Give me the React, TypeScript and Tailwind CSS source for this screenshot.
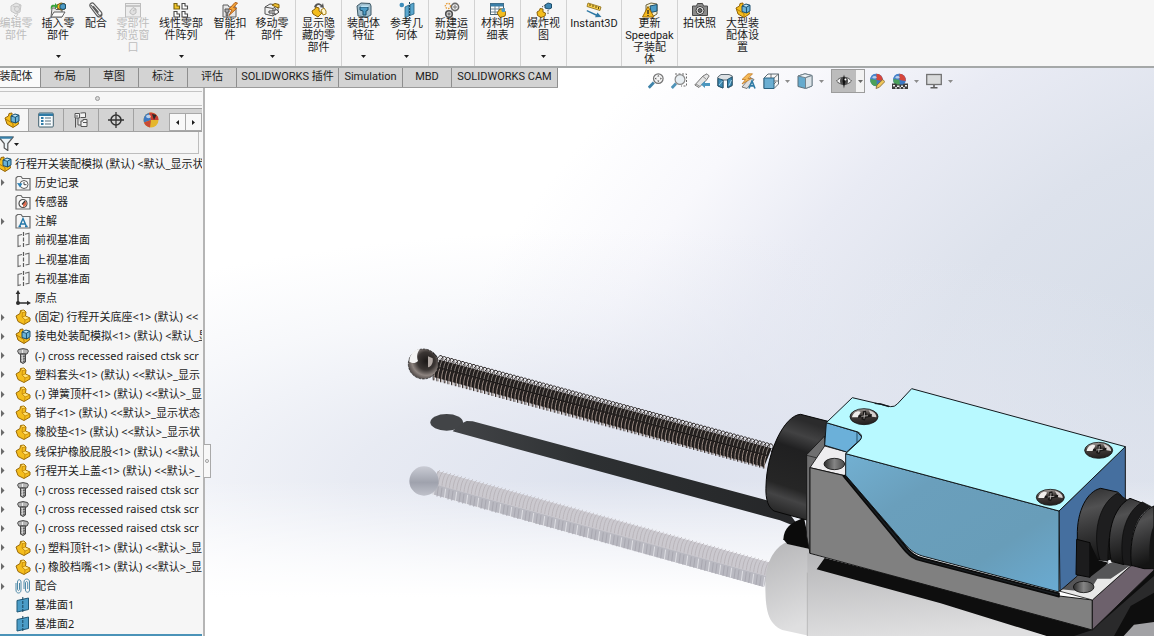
import React from "react";

type IconName =
  | "editPart" | "insert" | "clip" | "preview" | "pattern" | "fastener" | "move" | "showHide"
  | "features" | "refGeo" | "motion" | "bom" | "explode" | "instant" | "speedpak" | "camera" | "largeAsm"
  | "asm" | "part" | "screw" | "plane" | "origin" | "history" | "sensor" | "note" | "mates" | "planeBlue"
  | "props" | "config" | "target" | "ball" | "filter"
  | "zoomFit" | "zoomArea" | "prevView" | "section" | "annot" | "orient" | "display" | "eye" | "appearance" | "scene" | "monitor";

const partPath = (
  <g strokeLinejoin="round">
    <path d="M1 7 L5 4.5 L5.5 1.5 L9 1 L11 3 L10.5 7 L15 9 L15 12 L9 15.5 L3 12.5 Z" fill="#f4bd1d" stroke="#9a6a06" />
    <path d="M5.5 1.5 L7.5 3.5 L11 3 M7.5 3.5 L7 8 L10.5 7 M7 8 L10 11 L15 9 M10 11 L9.5 15" fill="none" stroke="#c48a10" strokeWidth="0.8" />
    <path d="M6 2 L9 1.5 L10 2.6 L7.7 3 Z M8 8.2 L10.5 7.5 L13.7 9 L10.2 10.3 Z" fill="#ffe27a" />
  </g>
);

const asmPath = (
  <g strokeLinejoin="round">
    <path d="M1 6 L4.5 4 L5 1.5 L8 1 L8 8 L14 9.5 L14.5 12 L9 15.5 L3 12 Z" fill="#f4bd1d" stroke="#946407" />
    <path d="M1.5 7 L9 11.5 L9 15" fill="none" stroke="#b37d0a" />
    <path d="M7 4 L11 2 L15 3.2 L15 9 L11.5 11 L7 9.5 Z" fill="#6bb3d8" stroke="#1c4f6e" />
    <path d="M7 4 L11.4 5.2 L15 3.2 M11.4 5.2 L11.5 11" fill="none" stroke="#1c4f6e" />
    <path d="M8.4 4 L11 2.7 L13.4 3.4 L11.3 4.6 Z" fill="#c4e7f6" />
  </g>
);

const folder = <path d="M1 15 L1 3 L2.5 1.5 L6 1.5 L7.5 3.5 L15 3.5 L15 15 Z" fill="#f5f5f5" stroke="#6b6b6b" strokeWidth="1.2" />;

const smallBall = (
  <>
    <circle cx="7.5" cy="7" r="6.3" fill="#3b78c5" />
    <path d="M7.5 7 L1.3 6 A6.3 6.3 0 0 1 7.5 0.7 Z" fill="#4a86cc" />
    <path d="M7.5 7 L7.5 0.7 A6.3 6.3 0 0 1 13.8 8 Z" fill="#d6463b" />
    <path d="M7.5 7 L1.3 6 A6.3 6.3 0 0 0 8 13.3 Z" fill="#4ba05a" />
    <ellipse cx="5.5" cy="4.2" rx="2" ry="1.3" fill="#ffffff" opacity="0.6" />
  </>
);

const icons: Record<IconName, React.ReactNode> = {
  editPart: (
    <g stroke="#c4c4c4" fill="#e2e2e2">
      <path d="M3 4 L8 1 L13 3 L12 10 L8 12 L3 9 Z" />
      <path d="M5 4 L10 6 L12 3 M10 6 L9 11 M6 13 L8 15 L10 12" fill="none" />
      <circle cx="9" cy="7" r="2.5" />
    </g>
  ),
  insert: (
    <>
      <path d="M1 15 L2 6 L5 6 L6 7.5 L12 7.5 L12 15 Z" fill="#e8e8e8" stroke="#606060" />
      <path d="M1 15 L4 10 L15 10 L12 15 Z" fill="#fafafa" stroke="#606060" />
      <path d="M7 3 L11 1 L15 2 L15 7 L11 8 L7 6 Z" fill="#f4bd1d" stroke="#6e5009" />
      <path d="M10 3 L13 1.5 L15.5 2.5 L15.5 6.5 L13 7.5 L10 6.5 Z" fill="#4d9bc5" stroke="#1d4e6b" />
      <path d="M1 8 C0 3 2 2 5 3 L5 1 L8 4 L5 7 L5 5 C3 4 2 5 1 8" fill="#38a33c" />
    </>
  ),
  clip: <path d="M3 3 L10.5 12.5 C12 14.5 15 12.5 13.3 10 L6 1.8 C4 -0.2 0.6 2 2.4 5 L9.3 14 C11 16 14.5 14.5 13.8 12 M10.5 10.5 L5.2 4.2" fill="none" stroke="#5b5b5b" strokeWidth="1.2" />,
  preview: (
    <g stroke="#bdbdbd" fill="#ededed">
      <rect x="0.5" y="1.5" width="15" height="13.5" />
      <path d="M1 4 L15 4" strokeWidth="1.6" />
      <path d="M5 9 L8 5.5 L11 7 L11 11 L8 13 L5 11 Z M8 9 L11 7" fill="#e0e0e0" />
    </g>
  ),
  pattern: (
    <g strokeWidth="1.1">
      <path d="M1 1.5 L4 1.5 L4 4 L6.5 4 L6.5 7 L1 7 Z" fill="#f2c62b" stroke="#77620e" />
      <path d="M9 1.5 L12 1.5 L12 4 L14.5 4 L14.5 7 L9 7 Z M1 9.5 L4 9.5 L4 12 L6.5 12 L6.5 15 L1 15 Z M9 9.5 L12 9.5 L12 12 L14.5 12 L14.5 15 L9 15 Z" fill="#ffffff" stroke="#4a4a4a" />
    </g>
  ),
  fastener: (
    <>
      <path d="M1 15 L1 3 L6 3 L7 5 L14 5 L14 15 Z" fill="#e7e7e7" stroke="#5c5c5c" />
      <path d="M3 7 L7 7 L7 10 L5.8 10 L5.8 14 L4.2 14 L4.2 10 L3 10 Z" fill="#a9a9a9" stroke="#555555" />
      <path d="M13 0.5 L7 7 L10 8 L7 13.5 L14.5 6.5 L11.5 5.5 L15.5 1 Z" fill="#f3a63a" stroke="#b4601a" />
    </>
  ),
  move: (
    <>
      <path d="M1 5 L6 2 L14 3 L14 10 L9 14 L1 12 Z" fill="#f0f0f0" stroke="#555555" />
      <path d="M1 5 L9 6.5 L14 3 M9 6.5 L9 14" fill="none" stroke="#555555" />
      <path d="M8 3 L11 1.5 L15 2.5 L15 6 L12 5 Z" fill="#f2c233" stroke="#80600d" />
      <path d="M5 9 L11 9 L11 6.5 L15 10 L11 13 L11 11 L5 11 Z" fill="#ffffff" stroke="#3c3c3c" />
    </>
  ),
  showHide: (
    <>
      <path d="M3 5 C4 1 8 0 11 3 L12 1 L13 6 L8.5 5 L10 4 C7 2 6 3 5 6 Z" fill="#555555" />
      <path d="M1 9 L4 7 L5 5 L8 6 L8 9 L11 11 L7 15 L2 12 Z" fill="#f4bd1d" stroke="#8a620b" />
      <path d="M10 8 L13 6 L15 9 L15 12 L12 13 Z" fill="#fff6d0" stroke="#a8821c" />
    </>
  ),
  features: (
    <>
      <path d="M1 4 L5 1 L14 1.5 L15 4 L15 13 L11 15 L2 14 Z" fill="#9dbccc" stroke="#3f5966" />
      <path d="M4 5 L12 5 L12 8 L10 9 L10 13 L7 13 L7 9 L4 8 Z" fill="#4d9bc5" stroke="#1d4e6b" />
      <path d="M4 5 L6 3.5 L13 3.5 L12 5 Z" fill="#bfe3f3" />
    </>
  ),
  refGeo: (
    <>
      <circle cx="2.8" cy="3" r="2.3" fill="#3d8cba" />
      <path d="M6 5 L10 3 L10 14 L6 15.5 Z M11 2.5 L15 1 L15 12 L11 13.5 Z" fill="#5aa6cd" stroke="#24607f" strokeWidth="0.8" />
      <path d="M10.5 0 L10.5 16" stroke="#1b4964" strokeDasharray="2 1" />
    </>
  ),
  motion: (
    <>
      <circle cx="4" cy="4" r="2.6" fill="none" stroke="#e69e3c" strokeWidth="1.4" strokeDasharray="1.5 1" />
      <circle cx="11" cy="5" r="3.6" fill="#f2f2f2" stroke="#6c6c6c" strokeWidth="1.6" />
      <circle cx="11" cy="5" r="1.2" fill="none" stroke="#6c6c6c" />
      <circle cx="5" cy="12" r="3.3" fill="#d6d6d6" stroke="#4f4f4f" strokeWidth="1.6" />
      <circle cx="5" cy="12" r="1" fill="#ffffff" stroke="#4f4f4f" />
    </>
  ),
  bom: (
    <>
      <rect x="0.5" y="1.5" width="13" height="11" fill="#ffffff" stroke="#476272" />
      <path d="M0.5 1.5 H13.5 V4.5 H0.5 Z" fill="#3b7fa8" />
      <path d="M1 7 H13 M1 10 H13 M5 4 V12 M9 4 V12" stroke="#6d8391" />
      <path d="M7 11 L10 7 L13 7 L13 9 L16 10 L15 14 L10 15.5 Z" fill="#f2bd20" stroke="#8a620b" />
      <path d="M11 7 L15 6 L15 10 L12 10 Z" fill="#4d9bc5" />
    </>
  ),
  explode: (
    <>
      <path d="M1 10 L3.5 8.5 L4 6.5 L7 7 L7 10 L9.5 11 L9 14 L5 15.5 L1.5 13.5 Z" fill="#f4bd1d" stroke="#8a620b" />
      <path d="M9 3 L12 1 L15.5 2 L15.5 6 L13 7 L9 6 Z" fill="#3f87b3" stroke="#1d4e6b" />
      <path d="M6 5 L9 3 M12 8 L12 12" stroke="#555555" strokeDasharray="1.5 1" />
    </>
  ),
  instant: (
    <>
      <path d="M2 1 L15 5 L14 8.5 L1 4.5 Z" fill="#f7d04c" stroke="#8a6a14" strokeWidth="0.8" />
      <path d="M4 2 V4 M7 3 V5 M10 4 V6 M12.5 5 V7" stroke="#5f490b" />
      <path d="M1 8 L10.5 12.2 L11.5 10.5 L15.5 15 L9 15.2 L9.8 13.8 L0.6 9.2 Z" fill="#2f79a5" />
    </>
  ),
  speedpak: (
    <>
      <path d="M4 3 L9 1 L15 2 L15 12 L10 15 L4 12 Z" fill="#f7f1d2" stroke="#6d6544" />
      <path d="M8 4 L15 2.5 L15 9 L9 10.5 Z" fill="#4d9bc5" stroke="#1d4e6b" />
      <path d="M6 4.5 L12 15 L0.5 15 Z" fill="#f5b91e" stroke="#9b6c06" />
      <path d="M6 8 V12 M6 13 V14" stroke="#222222" strokeWidth="1.3" />
    </>
  ),
  camera: (
    <>
      <path d="M0.5 4 H4.5 L5.5 1.5 H10.5 L11.5 4 H15.5 V13.5 H0.5 Z" fill="#8b8b8b" stroke="#484848" />
      <circle cx="8" cy="8.5" r="4" fill="#f0f0f0" stroke="#3a3a3a" />
      <circle cx="8" cy="8.5" r="2" fill="#6a6a6a" stroke="#333333" />
    </>
  ),
  largeAsm: asmPath,
  asm: asmPath,
  part: partPath,
  screw: (
    <>
      <path d="M3.5 1.5 L8 0.6 L12.5 1.5 L13.4 3.2 L12 6 L4 6 L2.6 3.2 Z" fill="#b5b5b5" stroke="#474747" />
      <path d="M5.5 6 H10.5 V14 L8 15.5 L5.5 14 Z" fill="#a2a2a2" stroke="#474747" />
      <path d="M5 9 L11 8 M5 11.5 L11 10.5 M5 14 L11 13" stroke="#4a4a4a" strokeWidth="0.8" />
      <path d="M7.5 2 V5 M7.2 7 V14" stroke="#eeeeee" />
    </>
  ),
  plane: (
    <>
      <path d="M7 2.5 L3 3.5 V14.5 L6 13.8 M10 2.2 L14 1.2 V12.2 L10.5 13" fill="none" stroke="#6a6a6a" strokeWidth="1.1" />
      <path d="M8.5 0 V16" stroke="#5a5a5a" strokeWidth="1.2" strokeDasharray="4 1.5" />
    </>
  ),
  origin: (
    <>
      <path d="M3 2 V13 H14" fill="none" stroke="#2e2e2e" strokeWidth="1.5" />
      <path d="M3 0 L5.3 4 H0.7 Z M16 13 L12 10.8 V15.2 Z" fill="#2e2e2e" />
      <circle cx="3" cy="13" r="2" fill="#2e2e2e" />
    </>
  ),
  history: (
    <>
      {folder}
      <circle cx="9" cy="9.5" r="4" fill="#ffffff" stroke="#5d5d5d" />
      <path d="M9 7 V9.7 H11.5" fill="none" stroke="#444444" />
      <path d="M2 8 L5 12.5 L7.5 8.5 Z" fill="#2f83b7" />
    </>
  ),
  sensor: (
    <>
      {folder}
      <circle cx="8" cy="9.5" r="4" fill="#ffffff" stroke="#4c4c4c" strokeWidth="1.2" />
      <path d="M8 9.5 L10.5 7 A3.5 3.5 0 0 1 8 13 Z" fill="#df6b4e" />
      <path d="M7 10.5 L10 7" stroke="#333333" strokeWidth="1.2" />
    </>
  ),
  note: (
    <>
      {folder}
      <path d="M4.5 13.5 L8 5.5 L11.5 13.5 M5.8 11 H10.2 M3.5 13.5 H6 M10 13.5 H12.7" fill="none" stroke="#2477a8" strokeWidth="1.4" />
    </>
  ),
  mates: (
    <g fill="none" stroke="#4f8aa8" strokeWidth="1">
      <path d="M1 5 V12 C1 16 6 16 6 12 V4 C6 1 2.5 1 2.5 4 V11 C2.5 13 4.5 13 4.5 11 V5" />
      <path d="M9 11 V4 C9 0 14.5 0 14.5 4 V12 C14.5 15 10.5 15 10.5 12 V5 C10.5 3 12.7 3 12.7 5 V11" />
    </g>
  ),
  planeBlue: (
    <>
      <path d="M2 3.5 L13.5 1 V12.5 L2 15 Z" fill="#4a9cc7" stroke="#1e5877" />
      <path d="M7.8 0 V16" stroke="#174660" strokeDasharray="3 1" />
    </>
  ),
  props: (
    <>
      <rect x="0.7" y="1" width="14.6" height="14" rx="1" fill="#f7fbfd" stroke="#41606f" />
      <path d="M1 1.5 H15 V4 H1 Z" fill="#2f7ba6" />
      <path d="M3 6 H5.5 M3 9 H5.5 M3 12 H5.5" stroke="#2f7ba6" strokeWidth="2" />
      <path d="M7 6 H13 M7 9 H13 M7 12 H13" stroke="#56707e" strokeWidth="1.2" />
    </>
  ),
  config: (
    <g fill="#f2f2f2" stroke="#555555">
      <path d="M2 1.5 H6.5 V6 H2 Z M2.5 6 V15.5 M2.5 4 H5 M5 6 V13 H8" />
      <path d="M7.5 1 H9.5 V0.8 H12.5 V5.5 H7.5 M8 9 H10 V7.5 H14 V14.5 H8 Z M10 10.5 H14" />
    </g>
  ),
  target: (
    <>
      <circle cx="8" cy="8" r="5" fill="none" stroke="#333333" strokeWidth="1.5" />
      <path d="M8 0 V16 M0 8 H16" stroke="#333333" strokeWidth="1.3" />
    </>
  ),
  ball: (
    <>
      <circle cx="8" cy="8" r="7.5" fill="#e4b62c" />
      <path d="M8 8 L1 10.5 A7.5 7.5 0 0 1 6 0.8 Z" fill="#3d79c2" />
      <path d="M8 8 L6 0.8 A7.5 7.5 0 0 1 15.5 8 Z" fill="#c93d32" />
      <path d="M8 8 L1 10.5 A7.5 7.5 0 0 0 7 15.4 Z" fill="#c94a35" />
      <path d="M9 2 L13.5 3 L11 8 Z" fill="#2b2b2b" />
      <ellipse cx="5.5" cy="4.5" rx="2.4" ry="1.8" fill="#ffffff" opacity="0.65" />
    </>
  ),
  filter: (
    <>
      <path d="M0.7 2 H15.3 L9.8 8.5 V15.5 L6.2 13 V8.5 Z" fill="#eef4f7" stroke="#555555" strokeWidth="1.2" />
      <path d="M1 1.5 H15 L13.6 3.8 H2.4 Z" fill="#377fa8" />
    </>
  ),
  zoomFit: (
    <>
      <path d="M0.8 14.8 L5.8 9.5" stroke="#3f83a9" strokeWidth="2.8" />
      <circle cx="10.3" cy="5.6" r="4.8" fill="#f4f4f4" stroke="#747474" strokeWidth="1.2" />
      <path d="M10.3 2 L11.4 3.6 H9.2 Z M10.3 9.2 L11.4 7.6 H9.2 Z M6.7 5.6 L8.3 4.5 V6.7 Z M13.9 5.6 L12.3 4.5 V6.7 Z" fill="#555555" />
    </>
  ),
  zoomArea: (
    <>
      <path d="M4 1 H15.5 V13 H10" fill="none" stroke="#6b6b6b" strokeDasharray="2 1.5" />
      <path d="M0.8 15 L5 10.5" stroke="#4f93b8" strokeWidth="2.8" />
      <circle cx="9" cy="6.5" r="4.9" fill="#e8eef2" stroke="#8a8a8a" strokeWidth="1.2" />
    </>
  ),
  prevView: (
    <>
      <path d="M0.8 12 L9 3 L13 0.8 L15.2 3 L12.5 7 L5 14.5 Z" fill="#e4e4e4" stroke="#777777" />
      <path d="M2 11 L6 13.5 M9 3.5 L12.5 6.5" stroke="#8e8e8e" />
      <path d="M7 11.5 L11 8 V10 H16 V13 H11 V15 Z" fill="#4c97bf" />
    </>
  ),
  section: (
    <>
      <path d="M0.8 4 L4 1.5 H12 L15.3 3 V12.5 L11 15 V7 L6 7 V15 L0.8 13 Z" fill="#dde1e4" stroke="#5f6d76" />
      <path d="M1 5.5 L6 7 V15 L1 13 Z M10.5 6.5 L15 4 V12.5 L10.5 14.5 Z" fill="#3f8cb6" stroke="#24546e" />
      <path d="M2 12 L5.5 8 M12 12.5 L14.5 7" stroke="#a4d1e6" />
    </>
  ),
  annot: (
    <>
      <path d="M2 14 L10 4.5 L14 6.5 L7 15.5 Z" fill="#dedede" stroke="#777777" />
      <path d="M8 0.8 L2 6.5 H5.5 L2 11 L11.5 5.5 H8 L12.5 0.8 Z" fill="#f5b957" stroke="#c07a24" strokeWidth="0.8" />
      <path d="M9 15.5 L12 8 L15 15.5 M10.3 12.9 H13.7" fill="none" stroke="#2f7ba6" strokeWidth="1.6" />
    </>
  ),
  orient: (
    <>
      <path d="M1 5 L5 1 H15.5 V11 L11 15.5 H1 Z" fill="#f7f7f7" stroke="#5f6d76" />
      <path d="M1 5 H11 V15.5 H1 Z" fill="#6baed2" stroke="#2c6382" />
      <path d="M11 5 L15.5 1 M8 1 V5 M11 8 H15 M11 11 L13 9" fill="none" stroke="#555555" strokeWidth="0.8" />
    </>
  ),
  display: (
    <>
      <path d="M1 3 L8 0.8 L15 2.5 V13 L8.5 15.5 L1 13.5 Z" fill="#65aacd" stroke="#5d6f7a" />
      <path d="M1 3 L8.5 4.7 L15 2.5 L8 0.8 Z" fill="#eef3f6" stroke="#72828c" />
      <path d="M8.5 4.7 L15 2.5 V13 L8.5 15.5 Z" fill="#dbe3e8" stroke="#72828c" />
    </>
  ),
  eye: (
    <>
      <path d="M0.5 8 C4 3 12 3 15.5 8 C12 12.5 4 12.5 0.5 8 Z" fill="#eeeeee" stroke="#555555" />
      <circle cx="8" cy="8" r="4" fill="#4b4b4b" />
      <path d="M8 1.5 L9.4 8 L8 15.5 L6.6 8 Z" fill="#111111" />
      <circle cx="9.4" cy="6.5" r="1" fill="#ffffff" />
    </>
  ),
  appearance: (
    <>
      {smallBall}
      <path d="M7 15.5 L8 12 L13.8 6.5 L15.8 8.7 L10.3 14.3 Z" fill="#f1c75b" stroke="#7d6330" strokeWidth="0.8" />
    </>
  ),
  scene: (
    <>
      {smallBall}
      <path d="M0 10.5 H4 L5 11.5 H11 L12 10.5 H16 V16 H0 Z" fill="#3c3c3c" />
      <path d="M1 12 H3 V13.5 H1 Z M5 12.5 H7.5 V14 H5 Z M9 12.5 H11 V14 H9 Z M13 12 H15 V13.5 H13 Z M3 14.3 H5 V15.5 H3 Z M7.5 14.3 H9 V15.5 H7.5 Z M11 14.3 H13 V15.5 H11 Z" fill="#eeeeee" />
    </>
  ),
  monitor: (
    <>
      <rect x="0.7" y="1.5" width="14.6" height="10" fill="#d9dadb" stroke="#737373" strokeWidth="1.3" />
      <path d="M8 12 V14.5 M4.5 14.7 H11.5" stroke="#5d5d5d" strokeWidth="1.6" />
    </>
  ),
};

function Icon({ name }: { name: IconName }) {
  return (
    <svg viewBox="0 0 16 16" className="block size-4 shrink-0" aria-hidden="true">
      {icons[name]}
    </svg>
  );
}

function Caret({ className = "" }: { className?: string }) {
  return (
    <svg viewBox="0 0 5 3" width="5" height="3" className={"block shrink-0 " + className} aria-hidden="true">
      <path d="M0 0 H5 L2.5 3 Z" fill="currentColor" />
    </svg>
  );
}

type Tool = { icon: IconName; lines: string[]; width: string; caret?: boolean; disabled?: boolean };

const ribbon: Tool[][] = [
  [
    { icon: "editPart", lines: ["编辑零", "部件"], width: "w-8", disabled: true },
    { icon: "insert", lines: ["插入零", "部件"], width: "w-[52px]", caret: true },
    { icon: "clip", lines: ["配合"], width: "w-6" },
    { icon: "preview", lines: ["零部件", "预览窗", "口"], width: "w-[50px]", disabled: true },
    { icon: "pattern", lines: ["线性零部", "件阵列"], width: "w-[46px]", caret: true },
    { icon: "fastener", lines: ["智能扣", "件"], width: "w-[52px]" },
    { icon: "move", lines: ["移动零", "部件"], width: "w-8 mr-[7px]", caret: true },
  ],
  [{ icon: "showHide", lines: ["显示隐", "藏的零", "部件"], width: "w-[45px]" }],
  [
    { icon: "features", lines: ["装配体", "特征"], width: "w-[43px]", caret: true },
    { icon: "refGeo", lines: ["参考几", "何体"], width: "w-[43px]", caret: true },
  ],
  [{ icon: "motion", lines: ["新建运", "动算例"], width: "w-[45px]" }],
  [{ icon: "bom", lines: ["材料明", "细表"], width: "w-[45px]" }],
  [{ icon: "explode", lines: ["爆炸视", "图"], width: "w-[45px]", caret: true }],
  [{ icon: "instant", lines: ["Instant3D"], width: "w-[54px]" }],
  [{ icon: "speedpak", lines: ["更新", "Speedpak", "子装配", "体"], width: "w-[55px]" }],
  [
    { icon: "camera", lines: ["拍快照"], width: "w-[43px]" },
    { icon: "largeAsm", lines: ["大型装", "配体设", "置"], width: "w-[43px]" },
  ],
];

const tabs = [
  { label: "装配体", width: "w-[41px]" },
  { label: "布局", width: "w-[49px]" },
  { label: "草图", width: "w-[49px]" },
  { label: "标注", width: "w-[49px]" },
  { label: "评估", width: "w-[49px]" },
  { label: "SOLIDWORKS 插件", width: "w-[102px]" },
  { label: "Simulation", width: "w-16" },
  { label: "MBD", width: "w-[49px]" },
  { label: "SOLIDWORKS CAM", width: "w-[106px]" },
];

const tree: { icon: IconName; label: string; open?: boolean }[] = [
  { icon: "history", label: "历史记录", open: true },
  { icon: "sensor", label: "传感器" },
  { icon: "note", label: "注解", open: true },
  { icon: "plane", label: "前视基准面" },
  { icon: "plane", label: "上视基准面" },
  { icon: "plane", label: "右视基准面" },
  { icon: "origin", label: "原点" },
  { icon: "part", label: "(固定) 行程开关底座<1> (默认) <<", open: true },
  { icon: "asm", label: "接电处装配模拟<1> (默认) <默认_显", open: true },
  { icon: "screw", label: "(-) cross recessed raised ctsk scr", open: true },
  { icon: "part", label: "塑料套头<1> (默认) <<默认>_显示", open: true },
  { icon: "part", label: "(-) 弹簧顶杆<1> (默认) <<默认>_显", open: true },
  { icon: "part", label: "销子<1> (默认) <<默认>_显示状态", open: true },
  { icon: "part", label: "橡胶垫<1> (默认) <<默认>_显示状", open: true },
  { icon: "part", label: "线保护橡胶屁股<1> (默认) <<默认", open: true },
  { icon: "part", label: "行程开关上盖<1> (默认) <<默认>_", open: true },
  { icon: "screw", label: "(-) cross recessed raised ctsk scr", open: true },
  { icon: "screw", label: "(-) cross recessed raised ctsk scr", open: true },
  { icon: "screw", label: "(-) cross recessed raised ctsk scr", open: true },
  { icon: "part", label: "(-) 塑料顶针<1> (默认) <<默认>_显", open: true },
  { icon: "part", label: "(-) 橡胶档嘴<1> (默认) <<默认>_显", open: true },
  { icon: "mates", label: "配合", open: true },
  { icon: "planeBlue", label: "基准面1" },
  { icon: "planeBlue", label: "基准面2" },
];

const coils = Array.from({ length: 91 }, (_, i) => i);

function Spring() {
  return (
    <g>
      <path d="M118 74 L1115 340 L1092 396 L100 126 Z" fill="#1d1a19" />
      {coils.map((i) => {
        const x = 108 + i * 11;
        const y = 66 + i * 2.94;
        return (
          <g key={i} fill="none">
            <path d={`M${x - 8} ${y + 70} C${x - 12} ${y + 40} ${x} ${y + 2} ${x + 12} ${y - 4} C${x + 22} ${y - 6} ${x + 24} ${y + 8} ${x + 16} ${y + 20}`} stroke="#2a2423" strokeWidth="3" />
            <path d={`M${x - 4} ${y + 70} C${x - 7} ${y + 52} ${x - 3} ${y + 42} ${x} ${y + 32}`} stroke="#a8978f" strokeWidth="2.8" />
            <path d={`M${x + 1} ${y + 28} C${x + 3} ${y + 12} ${x + 9} ${y + 4} ${x + 15} ${y + 3}`} stroke="#b5aca5" strokeWidth="2.2" />
            <path d={`M${x + 14} ${y - 1} L${x + 20} ${y + 5}`} stroke="#f2efec" strokeWidth="2" />
          </g>
        );
      })}
      <circle cx="70" cy="87" r="45" fill="url(#ball)" stroke="#111111" strokeWidth="2" strokeDasharray="8 3" />
      <path d="M28 80 C30 52 46 43 60 42 C50 54 50 66 54 78 C45 86 38 86 28 80 Z" fill="#f4f4f4" />
      <path d="M84 64 L98 70 C100 85 94 95 84 97 Z" fill="#c9bfbb" opacity="0.85" />
      <path d="M98 52 L112 66" stroke="#111111" strokeWidth="3" />
    </g>
  );
}

function SpringReflection() {
  return (
    <g>
      <path d="M112 408 L1115 684 L1092 756 L98 478 Z" fill="#cbc9cf" />
      <path d="M104 448 L1100 724 L1092 756 L98 478 Z" fill="#b9b9c1" />
      {coils.map((i) => {
        const x = 108 + i * 11;
        const y = 406 + i * 3.04;
        return (
          <g key={i} fill="none" opacity="0.75">
            <path d={`M${x - 4} ${y + 40} C${x - 2} ${y + 20} ${x + 4} ${y + 4} ${x + 12} ${y}`} stroke="#b4afb4" strokeWidth="3" />
            <path d={`M${x - 8} ${y + 76} L${x - 4} ${y + 46}`} stroke={i % 3 === 0 ? "#ececf0" : "#a3a2ab"} strokeWidth="3" />
          </g>
        );
      })}
      <circle cx="72" cy="438" r="44" fill="url(#ballReflection)" />
    </g>
  );
}

function Screw({ x, y }: { x: number; y: number }) {
  return (
    <g transform={`translate(${x} ${y})`}>
      <ellipse rx="42" ry="24" fill="url(#screwHead)" stroke="#141414" strokeWidth="2.5" />
      <path d="M-36 2 C-34 -15 -15 -20 -10 -14 L-18 2 Z" fill="#f1eeec" />
      <path d="M14 -19 C30 -16 38 -6 37 2 L24 0 Z" fill="#d6d0ce" />
      <path d="M-16 -5 L-2 -4 L-4 -16 L6 -18 L8 -5 L24 -8 L22 0 L6 3 L2 12 L-8 8 L-6 2 L-18 3 Z" fill="#191716" />
      <path d="M-8 -1 L12 -3 M2 -13 L0 6" stroke="#e8e2df" strokeWidth="2" />
    </g>
  );
}

function Hole({ x, y }: { x: number; y: number }) {
  return <ellipse cx={x} cy={y} rx="31" ry="17" fill="url(#hole)" stroke="#111111" strokeWidth="2.5" />;
}

function Scene() {
  return (
    <svg viewBox="0 68 1154 568" preserveAspectRatio="xMaxYMax slice" className="absolute inset-0 size-full" role="img" aria-label="行程开关装配模拟">
      <defs>
        <radialGradient id="sky" gradientUnits="userSpaceOnUse" cx="0" cy="0" r="1" gradientTransform="translate(1200 330) rotate(-28) scale(860 540)">
          <stop offset="0" stopColor="#d6dde8" />
          <stop offset="0.35" stopColor="#dde2ec" />
          <stop offset="0.6" stopColor="#e9ebf4" />
          <stop offset="0.8" stopColor="#f8f8fc" />
          <stop offset="1" stopColor="#ffffff" />
        </radialGradient>
        <radialGradient id="haze" gradientUnits="userSpaceOnUse" cx="0" cy="0" r="1" gradientTransform="translate(620 480) scale(760 250)">
          <stop offset="0" stopColor="#dde2ee" />
          <stop offset="0.35" stopColor="#e0e4ef" stopOpacity="0.75" />
          <stop offset="0.7" stopColor="#e3e7f1" stopOpacity="0.3" />
          <stop offset="1" stopColor="#e6e9f2" stopOpacity="0" />
        </radialGradient>
        <linearGradient id="floor" x1="0" y1="0" x2="0" y2="1">
          <stop offset="0" stopColor="#ffffff" stopOpacity="0" />
          <stop offset="0.75" stopColor="#ffffff" />
        </linearGradient>
        <radialGradient id="ball" cx="0.6" cy="0.4" r="0.6">
          <stop offset="0" stopColor="#1b1817" />
          <stop offset="0.5" stopColor="#3b3634" />
          <stop offset="0.8" stopColor="#8d8480" />
          <stop offset="1" stopColor="#5d5654" />
        </radialGradient>
        <linearGradient id="ballReflection" x1="0" y1="0" x2="0" y2="1">
          <stop offset="0" stopColor="#c9cbd4" />
          <stop offset="0.55" stopColor="#9fa2ad" />
          <stop offset="1" stopColor="#bfc1ca" />
        </linearGradient>
        <linearGradient id="rodShadow" x1="0" y1="0" x2="1" y2="0">
          <stop offset="0" stopColor="#424447" />
          <stop offset="0.4" stopColor="#2d3032" />
          <stop offset="1" stopColor="#252628" />
        </linearGradient>
        <linearGradient id="front" x1="0" y1="0" x2="1" y2="1">
          <stop offset="0" stopColor="#72b0d2" />
          <stop offset="0.3" stopColor="#6a9fbc" />
          <stop offset="0.7" stopColor="#689db9" />
          <stop offset="1" stopColor="#6aabd2" />
        </linearGradient>
        <linearGradient id="cap" x1="0.3" y1="0" x2="0.1" y2="1">
          <stop offset="0" stopColor="#2b2b2c" />
          <stop offset="0.14" stopColor="#424243" />
          <stop offset="0.28" stopColor="#202021" />
          <stop offset="0.65" stopColor="#262626" />
          <stop offset="0.76" stopColor="#444445" />
          <stop offset="1" stopColor="#161616" />
        </linearGradient>
        <linearGradient id="mirror" x1="0" y1="0" x2="0.2" y2="1">
          <stop offset="0" stopColor="#b6b6b8" />
          <stop offset="1" stopColor="#dfdfe0" />
        </linearGradient>
        <linearGradient id="screwHead" x1="0" y1="0" x2="0.2" y2="1">
          <stop offset="0" stopColor="#c8c1bd" />
          <stop offset="0.4" stopColor="#4b4542" />
          <stop offset="1" stopColor="#252120" />
        </linearGradient>
        <linearGradient id="hole" x1="0" y1="0" x2="1" y2="0">
          <stop offset="0" stopColor="#2b2b2b" />
          <stop offset="0.5" stopColor="#858585" />
          <stop offset="1" stopColor="#4a4a4a" />
        </linearGradient>
        <linearGradient id="rubber" x1="0" y1="0" x2="0.15" y2="1">
          <stop offset="0" stopColor="#2c2c2d" />
          <stop offset="0.3" stopColor="#515152" />
          <stop offset="0.55" stopColor="#3a3a3b" />
          <stop offset="1" stopColor="#141414" />
        </linearGradient>
      </defs>

      <rect y="68" width="1154" height="568" fill="#ffffff" />
      <rect y="68" width="1154" height="568" fill="url(#sky)" />
      <rect y="68" width="1154" height="568" fill="url(#haze)" />
      <rect y="480" width="1154" height="156" fill="url(#floor)" />

      <g transform="translate(400 335) scale(0.33333)">
        <ellipse cx="140" cy="262" rx="49" ry="25" fill="#424447" />
        <path d="M158 289 L180 268 L200 258 L218 259 L1100 496 L1150 510 L1200 580 L1140 556 Z" fill="url(#rodShadow)" />
        <SpringReflection />
        <Spring />
      </g>

      <g transform="translate(754 376) scale(0.33333)" strokeLinejoin="round">
        <path d="M34 620 C35 555 65 512 95 500 L168 520 L168 780 L85 762 C40 742 34 700 34 620 Z" fill="url(#mirror)" />
        <path d="M160 530 L220 548 L900 790 L160 790 Z" fill="url(#mirror)" />
        <path d="M160 590 V780" stroke="#aaaaac" strokeWidth="2" />
        <path d="M88 490 C90 455 110 440 150 425 L170 520 L100 504 Z" fill="#0b0b0b" />
        <path d="M212 546 L1015 752 L1200 560 L1200 790 L910 790 L560 682 L188 580 Z" fill="#0e0e0e" />
        <path d="M1015 762 L1200 600 L1200 650 L1130 690 L1080 780 L960 780 Z" fill="#2a2a2b" />
        <path d="M1140 746 L1200 738 V790 H1100 Z" fill="#a2a2a5" />

        <path d="M36 330 C38 230 90 118 140 115 L222 136 L214 185 L160 235 L158 432 L60 405 C35 390 35 350 36 330 Z" fill="url(#cap)" stroke="#070707" strokeWidth="3" />
        <path d="M158 236 L212 180 V212 L192 248 L168 275 V532 L158 480 Z" fill="#6f6f70" stroke="#151515" strokeWidth="2.5" />
        <path d="M158 238 L190 246" stroke="#151515" strokeWidth="2" />
        <path d="M168 275 L212 210 L278 228 V300 Z" fill="#eeedef" stroke="#151515" strokeWidth="2.5" />
        <Hole x={241} y={264} />

        <path d="M168 275 L275 300 L450 510 C470 540 490 550 510 552 L915 660 L1015 672 V762 L168 532 Z" fill="#808080" stroke="#151515" strokeWidth="3" />
        <path d="M1015 672 L1135 565 L1200 560 V582 L1015 762 Z" fill="#6d616c" stroke="#151515" strokeWidth="3" />
        <path d="M915 645 L970 600 L1090 555 L1135 565 L1015 672 Z" fill="#e8e8e8" stroke="#151515" strokeWidth="2.5" />
        <path d="M920 640 L970 600 L1085 556 L1132 566 L1070 608 L1030 608 L1005 648 Z" fill="#555557" />
        <Hole x={989} y={633} />

        <path d="M915 405 L1114 212 V420 L970 600 L918 645 Z" fill="#456f9f" stroke="#151515" strokeWidth="3" />
        <path d="M970 480 C968 405 1000 345 1040 337 L1090 348 C1110 360 1110 380 1105 400 L1070 550 L1035 552 L970 560 Z" fill="url(#rubber)" stroke="#080808" strokeWidth="3" />
        <path d="M1090 352 C1030 385 1015 480 1038 552 L1062 556 C1060 490 1075 400 1120 372 Z" fill="#1e1e1f" stroke="#080808" strokeWidth="2" />
        <path d="M1128 367 C1075 395 1055 480 1072 556 L1110 566 C1105 480 1125 410 1172 384 Z" fill="url(#rubber)" stroke="#080808" strokeWidth="3" />
        <path d="M1165 378 C1110 410 1095 490 1108 564 L1135 570 C1125 490 1140 420 1192 392 Z" fill="#1a1a1b" stroke="#080808" strokeWidth="2" />
        <path d="M1200 390 C1145 415 1125 490 1132 568 L1170 578 L1200 578 Z" fill="url(#rubber)" stroke="#080808" strokeWidth="3" />
        <path d="M1200 450 C1186 470 1182 540 1190 578 H1200 Z" fill="#151515" />
        <path d="M968 490 L1008 500 V604 L966 596 Z" fill="#1c1c1d" stroke="#070707" strokeWidth="3" />
        <path d="M1008 500 L1032 552 L1064 560 L1008 604 Z" fill="#0d0d0d" />

        <path d="M275 298 L450 505 C470 535 490 545 510 548 L915 652 V662 L505 555 C480 550 465 540 443 512 L268 300 Z" fill="#1b2024" stroke="#0b0b0b" strokeWidth="5" />
        <path d="M275 233 L915 405 V648 L505 540 C480 532 465 520 445 495 L275 298 Z" fill="url(#front)" stroke="#11181c" strokeWidth="3" />
        <path d="M217 140 L310 168 L325 185 L278 228 L212 208 Z" fill="#6bb0d9" stroke="#11181c" strokeWidth="3" />
        <path d="M309 168 V200" stroke="#173b50" strokeWidth="2.5" />
        <path d="M217 140 L295 65 L410 92 Q422 93 430 84 L473 38 L1114 212 L915 405 L275 233 L318 193 Q330 178 312 168 Z" fill="#b8f9ff" stroke="#11181c" strokeWidth="3" />
        <path d="M362 82 L380 84 L405 92" fill="none" stroke="#11181c" strokeWidth="4" />
        <Screw x={330} y={122} />
        <Screw x={1034} y={223} />
        <Screw x={889} y={364} />
      </g>
    </svg>
  );
}

function ViewTool({ icon, label, caret }: { icon: IconName; label: string; caret?: boolean }) {
  return (
    <button type="button" aria-label={label} className="flex h-6 items-center gap-[6px]">
      <Icon name={icon} />
      {caret && <Caret className="text-[#8c8c8c]" />}
    </button>
  );
}

export default function App() {
  return (
    <div className="flex h-screen min-h-[636px] flex-col overflow-hidden bg-white font-['Noto_Sans','Noto_Sans_CJK_SC',sans-serif] text-[11px] text-[#1c1c1c]">
      <header className="flex h-17 shrink-0 border-b-2 border-[#a5a8a8] bg-[#f6f6f6] font-['Roboto','Noto_Sans_CJK_SC',sans-serif]">
        {ribbon.map((group, g) => (
          <div key={g} className={g < ribbon.length - 1 ? "flex shrink-0 border-r border-[#d2d2d2]" : "flex shrink-0"}>
            {group.map((tool) => (
              <button
                key={tool.lines[0]}
                type="button"
                disabled={tool.disabled}
                className={`${tool.width} ${tool.disabled ? "text-[#bdbdbd]" : ""} flex h-full flex-col items-center pt-[2px]`}
              >
                <Icon name={tool.icon} />
                <span className="flex flex-col items-center leading-3 whitespace-nowrap">
                  {tool.lines.map((line) => (
                    <span key={line}>{line}</span>
                  ))}
                </span>
                {tool.caret && <Caret className="mt-auto mb-2" />}
              </button>
            ))}
          </div>
        ))}
      </header>

      <div className="relative flex min-h-0 flex-1 flex-col">
        <Scene />

        <nav className="relative flex h-5 shrink-0 self-start border-b border-[#9b9b9b] font-['Roboto','Noto_Sans_CJK_SC',sans-serif]" role="tablist" aria-label="命令管理器">
          {tabs.map((tab, i) => (
            <button
              key={tab.label}
              type="button"
              role="tab"
              aria-selected={i === 0}
              className={`${tab.width} ${i === 0 ? "bg-[#fafafa] pr-2" : "bg-[#d3d3d3]"} flex items-center justify-center border-r border-[#8e8e8e] whitespace-nowrap`}
            >
              {tab.label}
            </button>
          ))}
        </nav>

        <div className="relative flex min-h-0 flex-1">
          <aside className="flex w-[205px] shrink-0 flex-col border-r-2 border-[#b5b5b5] bg-[#f6f6f6] pr-px">
            <div className="mt-[3px] flex h-[15px] shrink-0 items-center justify-center border-y border-[#c4c4c4] pr-2">
              <span className="size-[5px] rounded-full border border-[#9a9a9a] bg-[#d8d8d8]" />
            </div>
            <div className="mt-[2px] flex h-6 shrink-0 border-y border-[#a2a2a2] bg-[#d3d3d3]" role="tablist" aria-label="管理器">
              <button type="button" role="tab" aria-selected="true" aria-label="设计树" className="flex w-7 items-center bg-[#f6f6f6] pl-1">
                <Icon name="asm" />
              </button>
              {(["props", "config", "target", "ball"] as IconName[]).map((name) => (
                <button key={name} type="button" role="tab" aria-selected="false" aria-label={name} className="flex w-[35px] items-center justify-center border-l border-[#a2a2a2]">
                  <Icon name={name} />
                </button>
              ))}
              <div className="mt-1 ml-px flex flex-1 border border-[#a8a8a8] bg-[#f8f8f8]">
                <button type="button" aria-label="向左" className="flex flex-1 items-center justify-center border-r border-[#a8a8a8]">
                  <Caret className="rotate-90" />
                </button>
                <button type="button" aria-label="向右" className="flex flex-1 items-center justify-center">
                  <Caret className="-rotate-90" />
                </button>
              </div>
            </div>
            <label className="mr-[3px] flex h-[22px] shrink-0 items-center border-r border-b border-[#bdbdbd]">
              <span className="-ml-[2px]">
                <Icon name="filter" />
              </span>
              <Caret className="mt-1" />
              <input type="text" aria-label="过滤" className="h-full min-w-0 flex-1 bg-transparent px-1 outline-none" />
            </label>

            <ul className="flex min-h-0 flex-1 flex-col overflow-hidden border-b-2 border-[#4a93b8] leading-4 whitespace-nowrap">
              <li className="-ml-1 flex flex-1 items-center gap-[3px]">
                <Icon name="asm" />
                行程开关装配模拟 (默认) &lt;默认_显示状
              </li>
              {tree.map((node, i) => (
                <li key={i} className="flex flex-1 items-center">
                  <span className="w-[15px] shrink-0">
                    {node.open && (
                      <button type="button" aria-label="展开" className="block">
                        <svg viewBox="0 0 5 7" width="5" height="7" aria-hidden="true">
                          <path d="M1 0 L4.5 3.5 L1 7 Z" fill="#6a6a6a" />
                        </svg>
                      </button>
                    )}
                  </span>
                  <Icon name={node.icon} />
                  <span className="pl-1">{node.label}</span>
                </li>
              ))}
            </ul>
          </aside>

          <button type="button" aria-label="收起面板" className="absolute top-[356px] left-[204px] flex h-[34px] w-[7px] items-center justify-center border border-l-0 border-[#a9a9a9] bg-[#f8f8f8]">
            <span className="size-1 rounded-full border border-[#a0a0a0]" />
          </button>
        </div>

        <div className="absolute top-px left-[648px] flex items-center gap-[7px]" role="toolbar" aria-label="视图">
          <ViewTool icon="zoomFit" label="整屏显示全图" />
          <ViewTool icon="zoomArea" label="局部放大" />
          <ViewTool icon="prevView" label="上一视图" />
          <ViewTool icon="section" label="剖面视图" />
          <ViewTool icon="annot" label="动态注解视图" />
          <ViewTool icon="orient" label="视图定向" caret />
          <ViewTool icon="display" label="显示样式" caret />
          <div className="flex items-center gap-1">
            <div className="flex h-6 border border-[#9c9c9c]">
              <button type="button" aria-label="隐藏显示项目" className="flex w-6 items-center justify-center bg-[#bcbcbc]">
                <Icon name="eye" />
              </button>
              <button type="button" aria-label="隐藏显示选项" className="flex w-2 items-center justify-center bg-[#f2f2f2] text-[#666666]">
                <Caret />
              </button>
            </div>
            <ViewTool icon="appearance" label="编辑外观" />
          </div>
          <ViewTool icon="scene" label="应用布景" caret />
          <ViewTool icon="monitor" label="视图设定" caret />
        </div>
      </div>
    </div>
  );
}
